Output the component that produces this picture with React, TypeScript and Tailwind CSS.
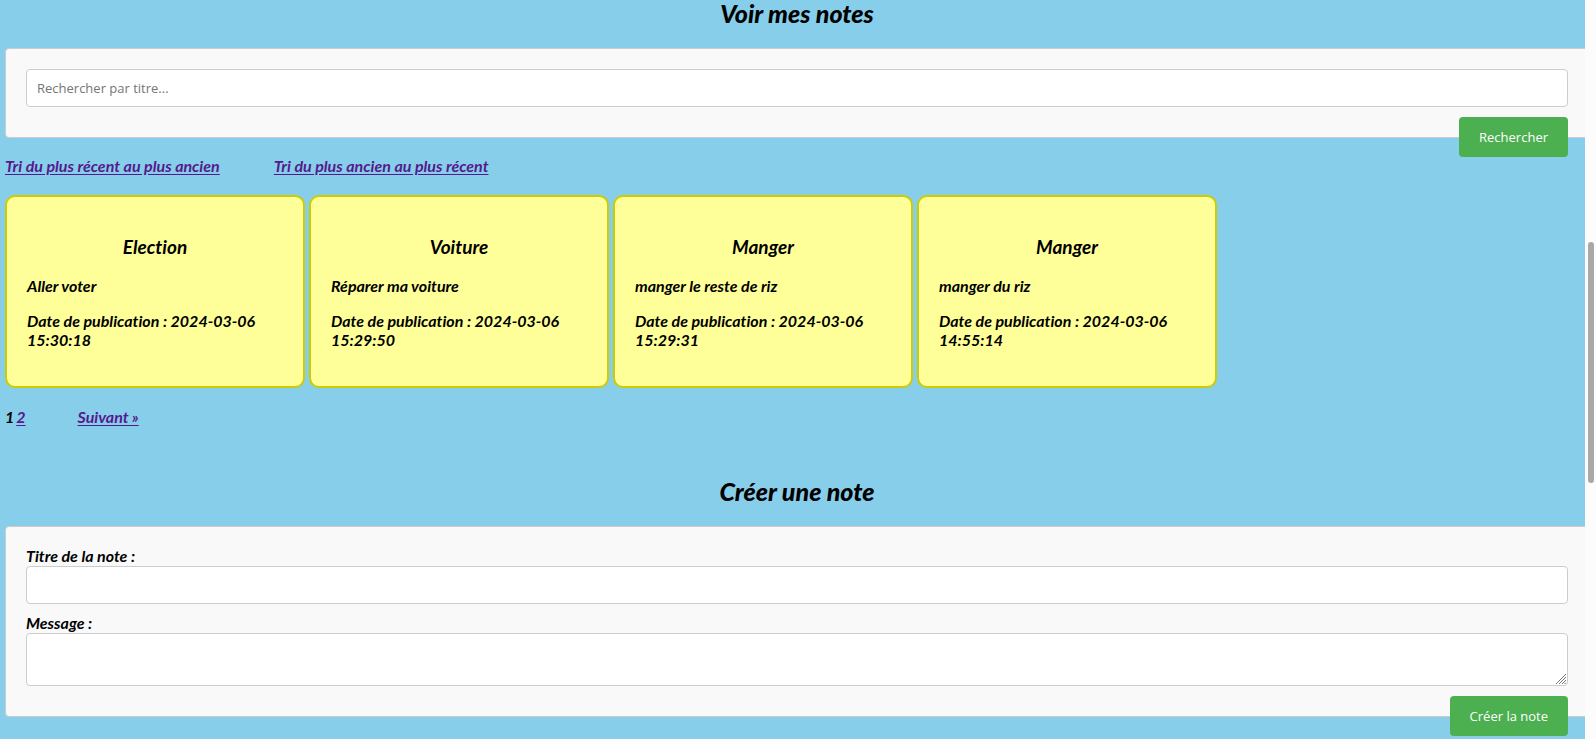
type Note = { id: number; title: string; message: string; date: string };

const notes: Note[] = [
  { id: 1, title: 'Election', message: 'Aller voter', date: '2024-03-06 15:30:18' },
  { id: 2, title: 'Voiture', message: 'Réparer ma voiture', date: '2024-03-06 15:29:50' },
  { id: 3, title: 'Manger', message: 'manger le reste de riz', date: '2024-03-06 15:29:31' },
  { id: 4, title: 'Manger', message: 'manger du riz', date: '2024-03-06 14:55:14' },
];

const headingClass = 'mb-[22px] text-center text-[25px] leading-[26px] font-black';
const formClass = 'flex flex-col rounded border border-[#cccccc] bg-[#f9f9f9] p-5';
const labelClass = 'mb-[2px] leading-[17px]';
const fieldClass =
  "block w-full rounded border border-[#cccccc] bg-white p-[10px] font-['Open_Sans',sans-serif] text-[13px] leading-4 text-black not-italic font-normal placeholder:text-[#757575] outline-none";
const buttonClass =
  "mt-[10px] -mb-10 h-10 self-end rounded bg-[#4caf50] px-5 font-['Open_Sans',sans-serif] text-[13px] font-normal not-italic text-white";
const linkClass = 'text-[#551a8b] underline underline-offset-2';

function NoteCard({ note }: { note: Note }) {
  return (
    <article className="w-[300px] rounded-[10px] border-2 border-[#cccc00] bg-[#ffff99] px-5 pt-[38px] pb-[37px]">
      <h3 className="mb-[18px] text-center text-[19px] leading-[23px]">{note.title}</h3>
      <p className="mb-4">{note.message}</p>
      <p>Date de publication : {note.date}</p>
    </article>
  );
}

export default function App() {
  return (
    <div className="flex min-h-screen bg-[#87ceeb]">
      <main className="min-w-0 flex-1 overflow-hidden font-[Lato,sans-serif] text-[16px] leading-[19px] font-bold text-black italic [font-variant-ligatures:none]">
        <div className="-mr-1 ml-[5px]">
          <section>
            <h2 className={headingClass}>Voir mes notes</h2>
            <form className={formClass} onSubmit={(e) => e.preventDefault()}>
              <input className={fieldClass} type="text" aria-label="Rechercher par titre" placeholder="Rechercher par titre..." />
              <button className={buttonClass} type="submit">Rechercher</button>
            </form>
            <nav className="mt-[18px] flex gap-[54px]" aria-label="Tri">
              <a className={linkClass} href="#recent">Tri du plus récent au plus ancien</a>
              <a className={linkClass} href="#ancien">Tri du plus ancien au plus récent</a>
            </nav>
            <div className="mt-5 flex flex-wrap gap-1">
              {notes.map((note) => (
                <NoteCard key={note.id} note={note} />
              ))}
            </div>
            <nav className="mt-[19px] flex gap-[52px]" aria-label="Pagination">
              <span className="flex gap-[2px]">
                <span>1</span>
                <a className={linkClass} href="#page-2">2</a>
              </span>
              <a className={linkClass} href="#page-2">Suivant »</a>
            </nav>
          </section>
          <section className="mt-[52px] pb-5">
            <h2 className={headingClass}>Créer une note</h2>
            <form className={formClass} onSubmit={(e) => e.preventDefault()}>
              <label className={labelClass} htmlFor="titre">Titre de la note :</label>
              <input id="titre" className={`${fieldClass} mb-[10px]`} type="text" />
              <label className={labelClass} htmlFor="message">Message :</label>
              <div className="relative">
                <textarea id="message" className={`${fieldClass} h-[53px] [&::-webkit-resizer]:hidden`} />
                <svg
                  className="pointer-events-none absolute right-[2px] bottom-[2px] size-[10px]"
                  viewBox="0 0 10 10"
                  stroke="#777777"
                  strokeWidth="1"
                  aria-hidden="true"
                >
                  <path d="M0 10 10 0M3 10 10 3M6 10 10 6M8.5 10 10 8.5" />
                </svg>
              </div>
              <button className={buttonClass} type="submit">Créer la note</button>
            </form>
          </section>
        </div>
      </main>
      <div className="w-[11px] bg-[#fcfcfc] pt-[242px] pr-[2px] pl-[3px]" aria-hidden="true">
        <div className="h-[241px] rounded-full bg-[#a8a8a8]" />
      </div>
    </div>
  );
}
